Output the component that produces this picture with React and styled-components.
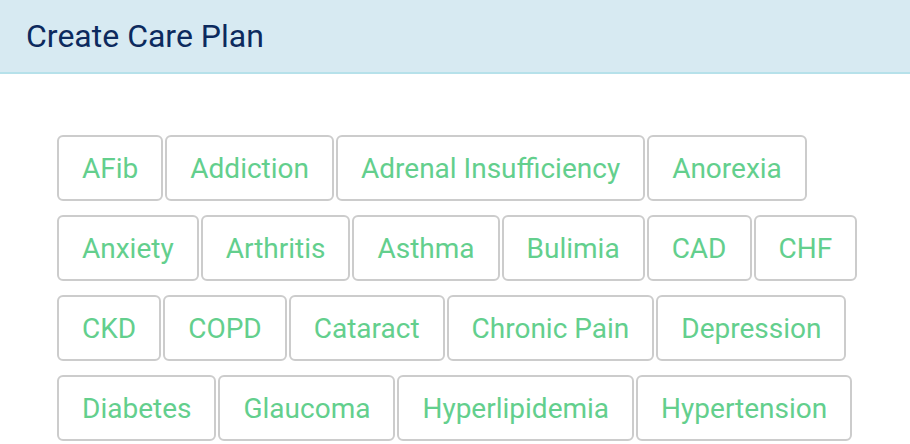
import React from 'react';
import styled, { createGlobalStyle } from 'styled-components';

const GlobalStyle = createGlobalStyle`
  body {
    margin: 0;
    background: #fff;
    font-family: Roboto, "Liberation Sans", sans-serif;
  }
`;

const Header = styled.header`
  height: 72px;
  background: #d7eaf2;
  border-bottom: 2px solid #b6e1ea;
  display: flex;
  align-items: center;
  padding-left: 26px;
`;

const Title = styled.h1`
  margin: 0 0 1px;
  font-size: 32px;
  font-weight: 400;
  color: #0c2a5e;
`;

const ConditionList = styled.div`
  display: flex;
  flex-wrap: wrap;
  column-gap: 2px;
  row-gap: 14px;
  padding: 61px 40px 0 57px;
`;

const ConditionButton = styled.button`
  height: 66px;
  padding: 0 23px;
  border: 2px solid #cccccc;
  border-radius: 6px;
  background: #fff;
  color: #63cf8d;
  font-family: Roboto, "Liberation Sans", sans-serif;
  font-size: 28px;
  cursor: pointer;
`;

const conditions = [
  'AFib', 'Addiction', 'Adrenal Insufficiency', 'Anorexia',
  'Anxiety', 'Arthritis', 'Asthma', 'Bulimia', 'CAD', 'CHF',
  'CKD', 'COPD', 'Cataract', 'Chronic Pain', 'Depression',
  'Diabetes', 'Glaucoma', 'Hyperlipidemia', 'Hypertension',
];

export default function App() {
  return (
    <>
      <GlobalStyle />
      <Header>
        <Title>Create Care Plan</Title>
      </Header>
      <ConditionList>
        {conditions.map((name) => (
          <ConditionButton key={name}>{name}</ConditionButton>
        ))}
      </ConditionList>
    </>
  );
}
